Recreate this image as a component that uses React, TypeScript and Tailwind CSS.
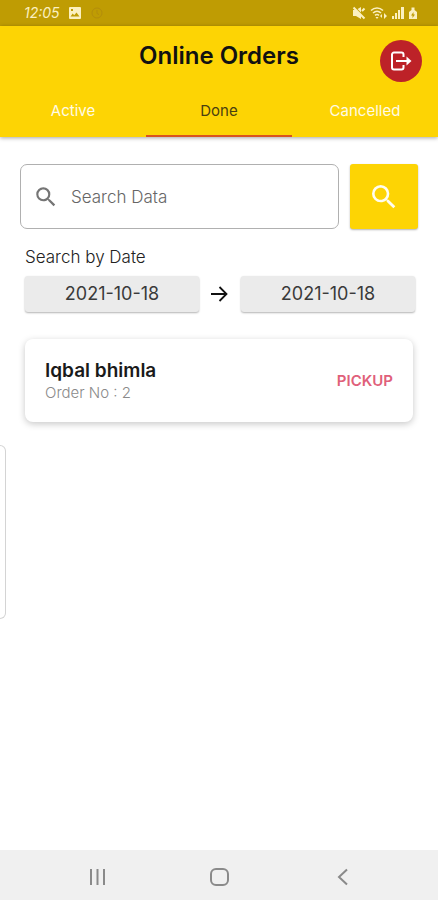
import React, { useState } from 'react';

const tabs = ['Active', 'Done', 'Cancelled'];

const orders = [{ id: 2, name: 'Iqbal bhimla', type: 'PICKUP' }];

function SearchIcon({ className }: { className: string }) {
  return (
    <svg viewBox="0 0 24 24" fill="currentColor" className={className} aria-hidden="true">
      <path d="M15.5 14h-.79l-.28-.27A6.47 6.47 0 0 0 16 9.5 6.5 6.5 0 1 0 9.5 16c1.61 0 3.09-.59 4.23-1.57l.27.28v.79l5 4.99L20.49 19l-4.99-5zm-6 0C7.01 14 5 11.99 5 9.5S7.01 5 9.5 5 14 7.01 14 9.5 11.99 14 9.5 14z" />
    </svg>
  );
}

function StatusBar() {
  return (
    <div className="flex h-[26px] items-center justify-between bg-[#bf9c03] pr-5 pl-6 text-[#fbf0c0]">
      <div className="flex items-center gap-2">
        <span className="text-[14px] leading-4 italic">12:05</span>
        <svg viewBox="0 0 14 14" className="size-[14px]" aria-hidden="true">
          <path fill="currentColor" fillRule="evenodd" d="M2 1h10a1 1 0 0 1 1 1v10a1 1 0 0 1-1 1H2a1 1 0 0 1-1-1V2a1 1 0 0 1 1-1zm.5 9.500h9L8.500 6.500 6.200 9.200 4.700 7.600zM3 3v2h2V3z" />
        </svg>
        <svg viewBox="0 0 14 14" className="size-[14px] text-[#b38d0c]" fill="none" stroke="currentColor" aria-hidden="true">
          <circle cx="7" cy="7" r="5" />
          <path d="M7 4v3.500l2 1" />
        </svg>
      </div>
      <div className="flex items-center gap-1">
        <svg viewBox="0 0 14 14" className="size-[14px]" aria-hidden="true">
          <path fill="currentColor" d="M1 4h3l5-3v12L4 10H1z" />
          <path stroke="#bf9c03" strokeWidth="1.500" d="M2.500 1l10 10" />
          <path stroke="currentColor" strokeWidth="2" d="M1.500 1.500l11 11M10 5l2.500-2.500" />
        </svg>
        <svg viewBox="0 0 18 14" className="h-[14px] w-[18px]" fill="none" stroke="currentColor" strokeWidth="1.600" aria-hidden="true">
          <path d="M1 4.500c3.500-3.300 8.500-3.300 12 0M3 7c2.500-2.200 5.500-2.200 8 0M5 9.300c1.300-1 2.700-1 4 0" />
          <path fill="currentColor" stroke="none" d="M5.500 11h3L7 13zM10 10l2-2v4zM17 10l-3-3v6z" />
        </svg>
        <svg viewBox="0 0 12 14" className="h-[14px] w-3" fill="currentColor" aria-hidden="true">
          <path d="M0 10h2v3H0zM3 7h2v6H3zM6 4h2v9H6zM9 1h3v12H9z" />
        </svg>
        <svg viewBox="0 0 10 14" className="h-[14px] w-[10px]" aria-hidden="true">
          <path fill="currentColor" fillRule="evenodd" d="M3.500 1.500h3V4L9 6v7H1V6l2.500-2zM5.500 6L3 9.500h1.500V12L7 8.500H5.500z" />
        </svg>
      </div>
    </div>
  );
}

function DateButton({ label, value }: { label: string; value: string }) {
  return (
    <button aria-label={label} className="h-9 flex-1 rounded-[3px] bg-[#ebebeb] text-[18px] leading-6 text-[#3a3a3a] shadow-[0_1px_2px_rgba(0,0,0,0.3)]">
      {value}
    </button>
  );
}

export default function App() {
  const [tab, setTab] = useState('Done');
  const [query, setQuery] = useState('');

  return (
    <div className="relative flex min-h-screen flex-col bg-white font-['Inter',sans-serif]">
      <StatusBar />

      <header className="bg-[#fdd404] shadow-[0_1px_4px_rgba(0,0,0,0.35)]">
        <div className="grid h-[60px] grid-cols-[1fr_auto_1fr] items-center px-4">
          <h1 className="col-start-2 text-[24px] leading-7 font-semibold text-[#111]">Online Orders</h1>
          <button aria-label="Log out" className="mt-[10px] flex size-[42px] items-center justify-center justify-self-end rounded-full bg-[#bd2228] text-white">
            <svg viewBox="0 0 24 24" className="size-6" fill="none" stroke="currentColor" strokeWidth="2" aria-hidden="true">
              <path d="M14.500 8V5.500a2 2 0 0 0-2-2H5a2 2 0 0 0-2 2v13a2 2 0 0 0 2 2h7.500a2 2 0 0 0 2-2V16" />
              <path d="M7 12h12" />
              <path fill="currentColor" stroke="none" d="M17.500 7.500l5 4.500-5 4.500z" />
            </svg>
          </button>
        </div>
        <nav className="grid h-[51px] grid-cols-3">
          {tabs.map(t => (
            <button
              key={t}
              onClick={() => setTab(t)}
              className={`border-b-2 text-[15px] leading-5 ${t === tab ? 'border-[#d9531e] text-[#4a3f10]' : 'border-transparent text-[#fffbe6]'}`}
            >
              {t}
            </button>
          ))}
        </nav>
      </header>

      <main className="flex-1 px-5 pt-[27px]">
        <form className="flex gap-[11px]" onSubmit={e => e.preventDefault()}>
          <label className="flex h-[65px] min-w-0 flex-1 items-center gap-3 rounded-[7px] border border-[#b0b0b0] px-3 text-[#757575]">
            <SearchIcon className="size-[26px] shrink-0" />
            <input
              type="text"
              aria-label="Search Data"
              placeholder="Search Data"
              value={query}
              onChange={e => setQuery(e.target.value)}
              className="w-full min-w-0 text-[17px] leading-6 font-light text-[#333] outline-none placeholder:text-[#666]"
            />
          </label>
          <button aria-label="Search" className="flex h-[65px] w-[68px] items-center justify-center rounded-[3px] bg-[#fdd404] text-[#fffdf0] shadow-[0_1px_2px_rgba(0,0,0,0.3)]">
            <SearchIcon className="size-8" />
          </button>
        </form>

        <p className="mt-4 px-[5px] text-[17px] leading-6 font-light text-[#222]">Search by Date</p>
        <div className="mt-[7px] flex items-center gap-[11px] pr-[3px] pl-[5px]">
          <DateButton label="From date" value="2021-10-18" />
          <svg viewBox="0 0 20 20" className="size-5" fill="none" stroke="#111" strokeWidth="1.800" aria-hidden="true">
            <path d="M1 10h15M9.500 3l7 7-7 7" />
          </svg>
          <DateButton label="To date" value="2021-10-18" />
        </div>

        <ul className="mt-[27px] px-[5px]">
          {orders.map(o => (
            <li key={o.id} className="flex h-[83px] items-center justify-between rounded-[8px] bg-white px-5 shadow-[0_2px_7px_rgba(0,0,0,0.22)]">
              <div>
                <h2 className="text-[19px] leading-6 font-semibold text-[#1a1a1a]">{o.name}</h2>
                <p className="text-[15px] leading-5 font-light text-[#8a8a8a]">Order No : {o.id}</p>
              </div>
              <span className="text-[15px] leading-5 font-semibold text-[#e0607a]">{o.type}</span>
            </li>
          ))}
        </ul>
      </main>

      {/* edge panel handle */}
      <div className="absolute top-[445px] left-0 h-[174px] w-[6px] rounded-r-[6px] border border-l-0 border-[#d4d4d4] bg-white"></div>

      <footer className="grid h-[50px] grid-cols-[1fr_50px_1fr] items-center bg-[#f0f0f0] px-[84px] pt-1 text-[#8a8a8a]">
        <button aria-label="Recent apps" className="justify-self-start">
          <svg viewBox="0 0 24 24" className="size-6" stroke="currentColor" strokeWidth="2" aria-hidden="true">
            <path d="M7 4v16M13.500 4v16M20 4v16" />
          </svg>
        </button>
        <button aria-label="Home" className="justify-self-center">
          <svg viewBox="0 0 24 24" className="size-6" fill="none" stroke="currentColor" strokeWidth="2" aria-hidden="true">
            <rect x="4" y="4" width="17" height="16" rx="5" />
          </svg>
        </button>
        <button aria-label="Back" className="justify-self-end">
          <svg viewBox="0 0 24 24" className="size-6" fill="none" stroke="currentColor" strokeWidth="2" aria-hidden="true">
            <path d="M17 4.500L9 12l8 7.500" />
          </svg>
        </button>
      </footer>
    </div>
  );
}
